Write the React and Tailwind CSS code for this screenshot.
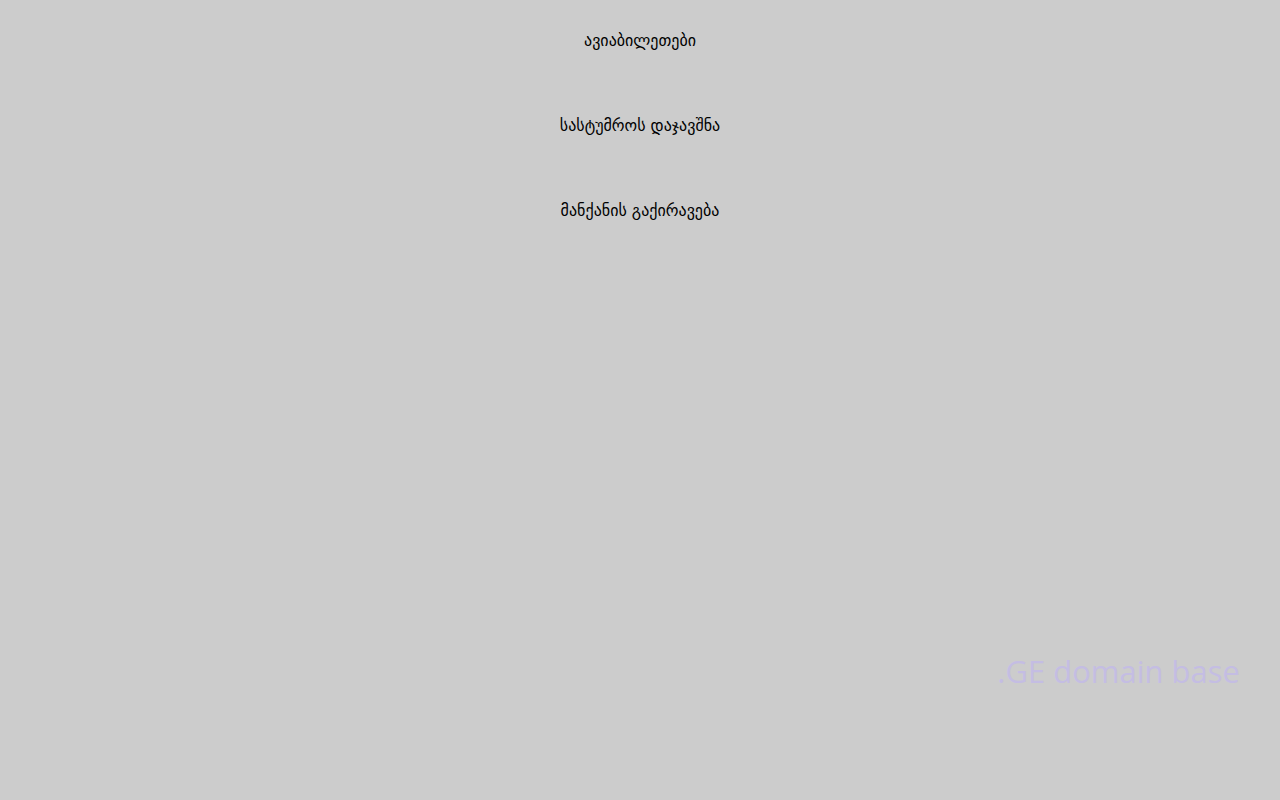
export default function App() {
  const links = ["ავიაბილეთები", "სასტუმროს დაჯავშნა", "მანქანის გაქირავება"];

  return (
    <div className="min-h-screen w-full bg-[#cccccc] font-['DejaVu_Sans',sans-serif] flex flex-col">
      {/* Links */}
      <ul className="flex flex-col items-center pt-[31px] gap-[66px]">
        {links.map((label) => (
          <li key={label} className="leading-[19px]">
            <a href="#" className="text-[16px] leading-[19px] text-black">
              {label}
            </a>
          </li>
        ))}
      </ul>

      {/* Footer brand */}
      <div className="mt-[433px] pr-10 text-right">
        <span className="font-['Open_Sans',sans-serif] text-[31px] leading-[36px] text-[#c4bde3]">
          .GE domain base
        </span>
      </div>
    </div>
  );
}
